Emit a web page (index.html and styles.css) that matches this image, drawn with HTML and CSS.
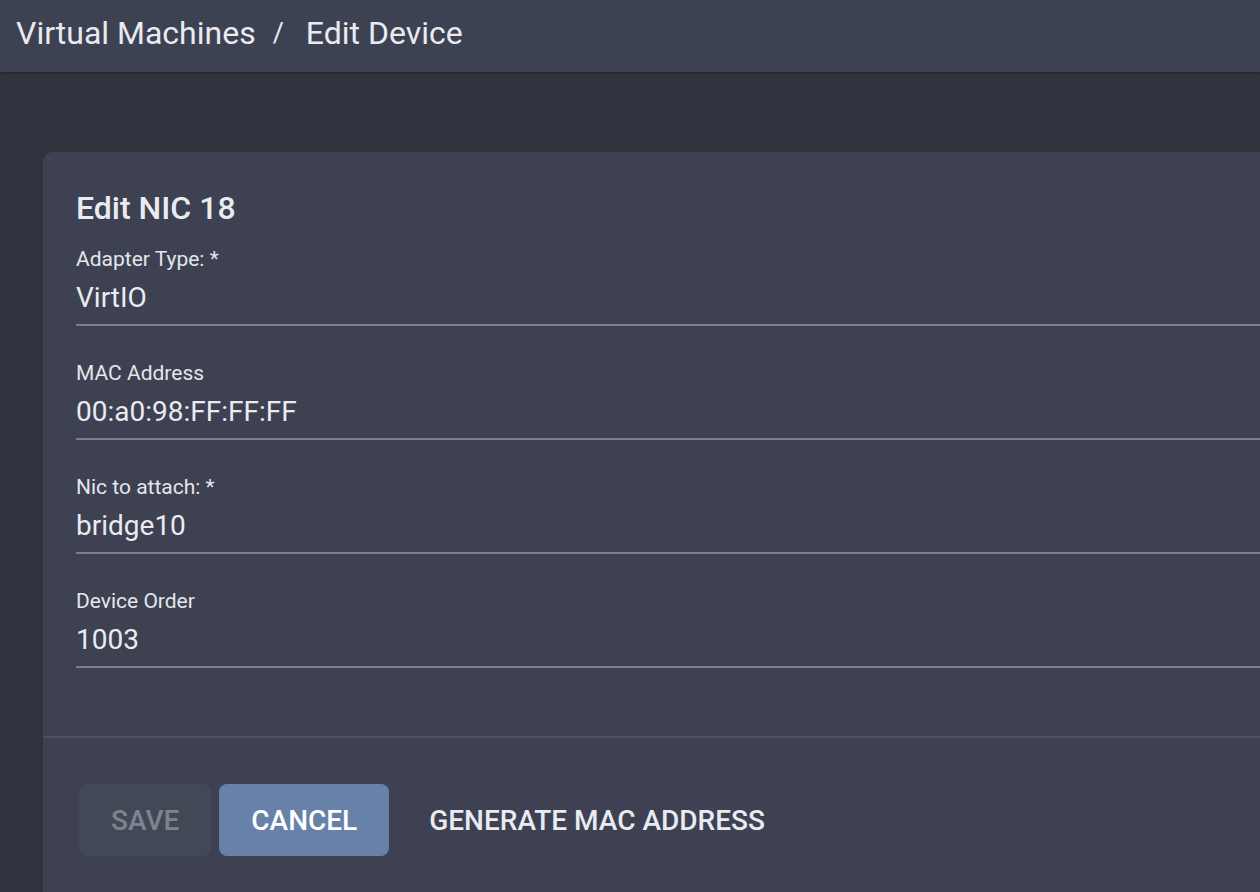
FILE: index.html
```html
<!DOCTYPE html>
<html lang="en">
<head>
<meta charset="utf-8">
<title>Edit Device</title>
<link rel="stylesheet" href="styles.css">
</head>
<body>
<header class="topbar">
  <nav class="crumbs">
    <span class="crumb">Virtual Machines</span>
    <span class="sep">/</span>
    <span class="crumb">Edit Device</span>
  </nav>
</header>
<main class="main">
  <section class="card">
    <div class="card-body">
      <h1 class="title">Edit NIC 18</h1>
      <div class="field">
        <label class="label">Adapter Type: *</label>
        <div class="value">VirtIO</div>
      </div>
      <div class="field">
        <label class="label">MAC Address</label>
        <div class="value">00:a0:98:FF:FF:FF</div>
      </div>
      <div class="field">
        <label class="label">Nic to attach: *</label>
        <div class="value">bridge10</div>
      </div>
      <div class="field">
        <label class="label">Device Order</label>
        <div class="value">1003</div>
      </div>
    </div>
    <div class="card-actions">
      <button class="btn btn-disabled" disabled>Save</button>
      <button class="btn btn-primary">Cancel</button>
      <button class="btn btn-text">Generate MAC Address</button>
    </div>
  </section>
</main>
</body>
</html>
```
FILE: styles.css
```css
* { box-sizing: border-box; }
html, body { margin: 0; padding: 0; }
body {
  background: #31343f;
  font-family: Roboto, "Noto Sans", "Liberation Sans", sans-serif;
  color: #e9ebf1;
  height: 892px;
  overflow: hidden;
}
.topbar {
  height: 72px;
  background: #3d4253;
  box-shadow: 0 1px 3px rgba(0,0,0,0.35);
  display: flex;
  align-items: center;
  padding: 0 16px 7px 16px;
  position: relative;
}
.crumbs {
  display: flex;
  align-items: center;
  font-size: 32px;
  line-height: 36px;
}
.sep { margin: 0 22px 0 17px; font-size: 27px; }
.main {
  padding: 80px 0 0 43px;
}
.card {
  background: #3d4152;
  border-radius: 10px 0 0 0;
  width: calc(1260px - 43px + 40px);
  min-height: 760px;
}
.card-body {
  padding: 32px 0 68px 33px;
}
.title {
  margin: 0;
  font-size: 32px;
  font-weight: 500;
  line-height: 48px;
}
.field {
  margin-top: 15px;
  border-bottom: 2px solid #7b7e8b;
  padding-bottom: 10px;
}
.field + .field { margin-top: 35px; }
.label {
  display: block;
  font-size: 21px;
  line-height: 24px;
  color: #e4e6ec;
}
.value {
  margin-top: 11px;
  font-size: 28px;
  line-height: 32px;
}
.card-actions {
  border-top: 2px solid #4c5061;
  padding: 46px 0 0 36px;
  display: flex;
  gap: 8px;
}
.btn {
  height: 72px;
  padding: 0 32px;
  border: none;
  border-radius: 8px;
  font-family: inherit;
  font-size: 28px;
  font-weight: 500;
  text-transform: uppercase;
  background: transparent;
  color: #e9ebf1;
}
.btn-disabled { background: #434857; color: #7f838f; }
.btn-primary { background: #6781a9; color: #ffffff; }
.btn-text { color: #e9ebf1; }
```
